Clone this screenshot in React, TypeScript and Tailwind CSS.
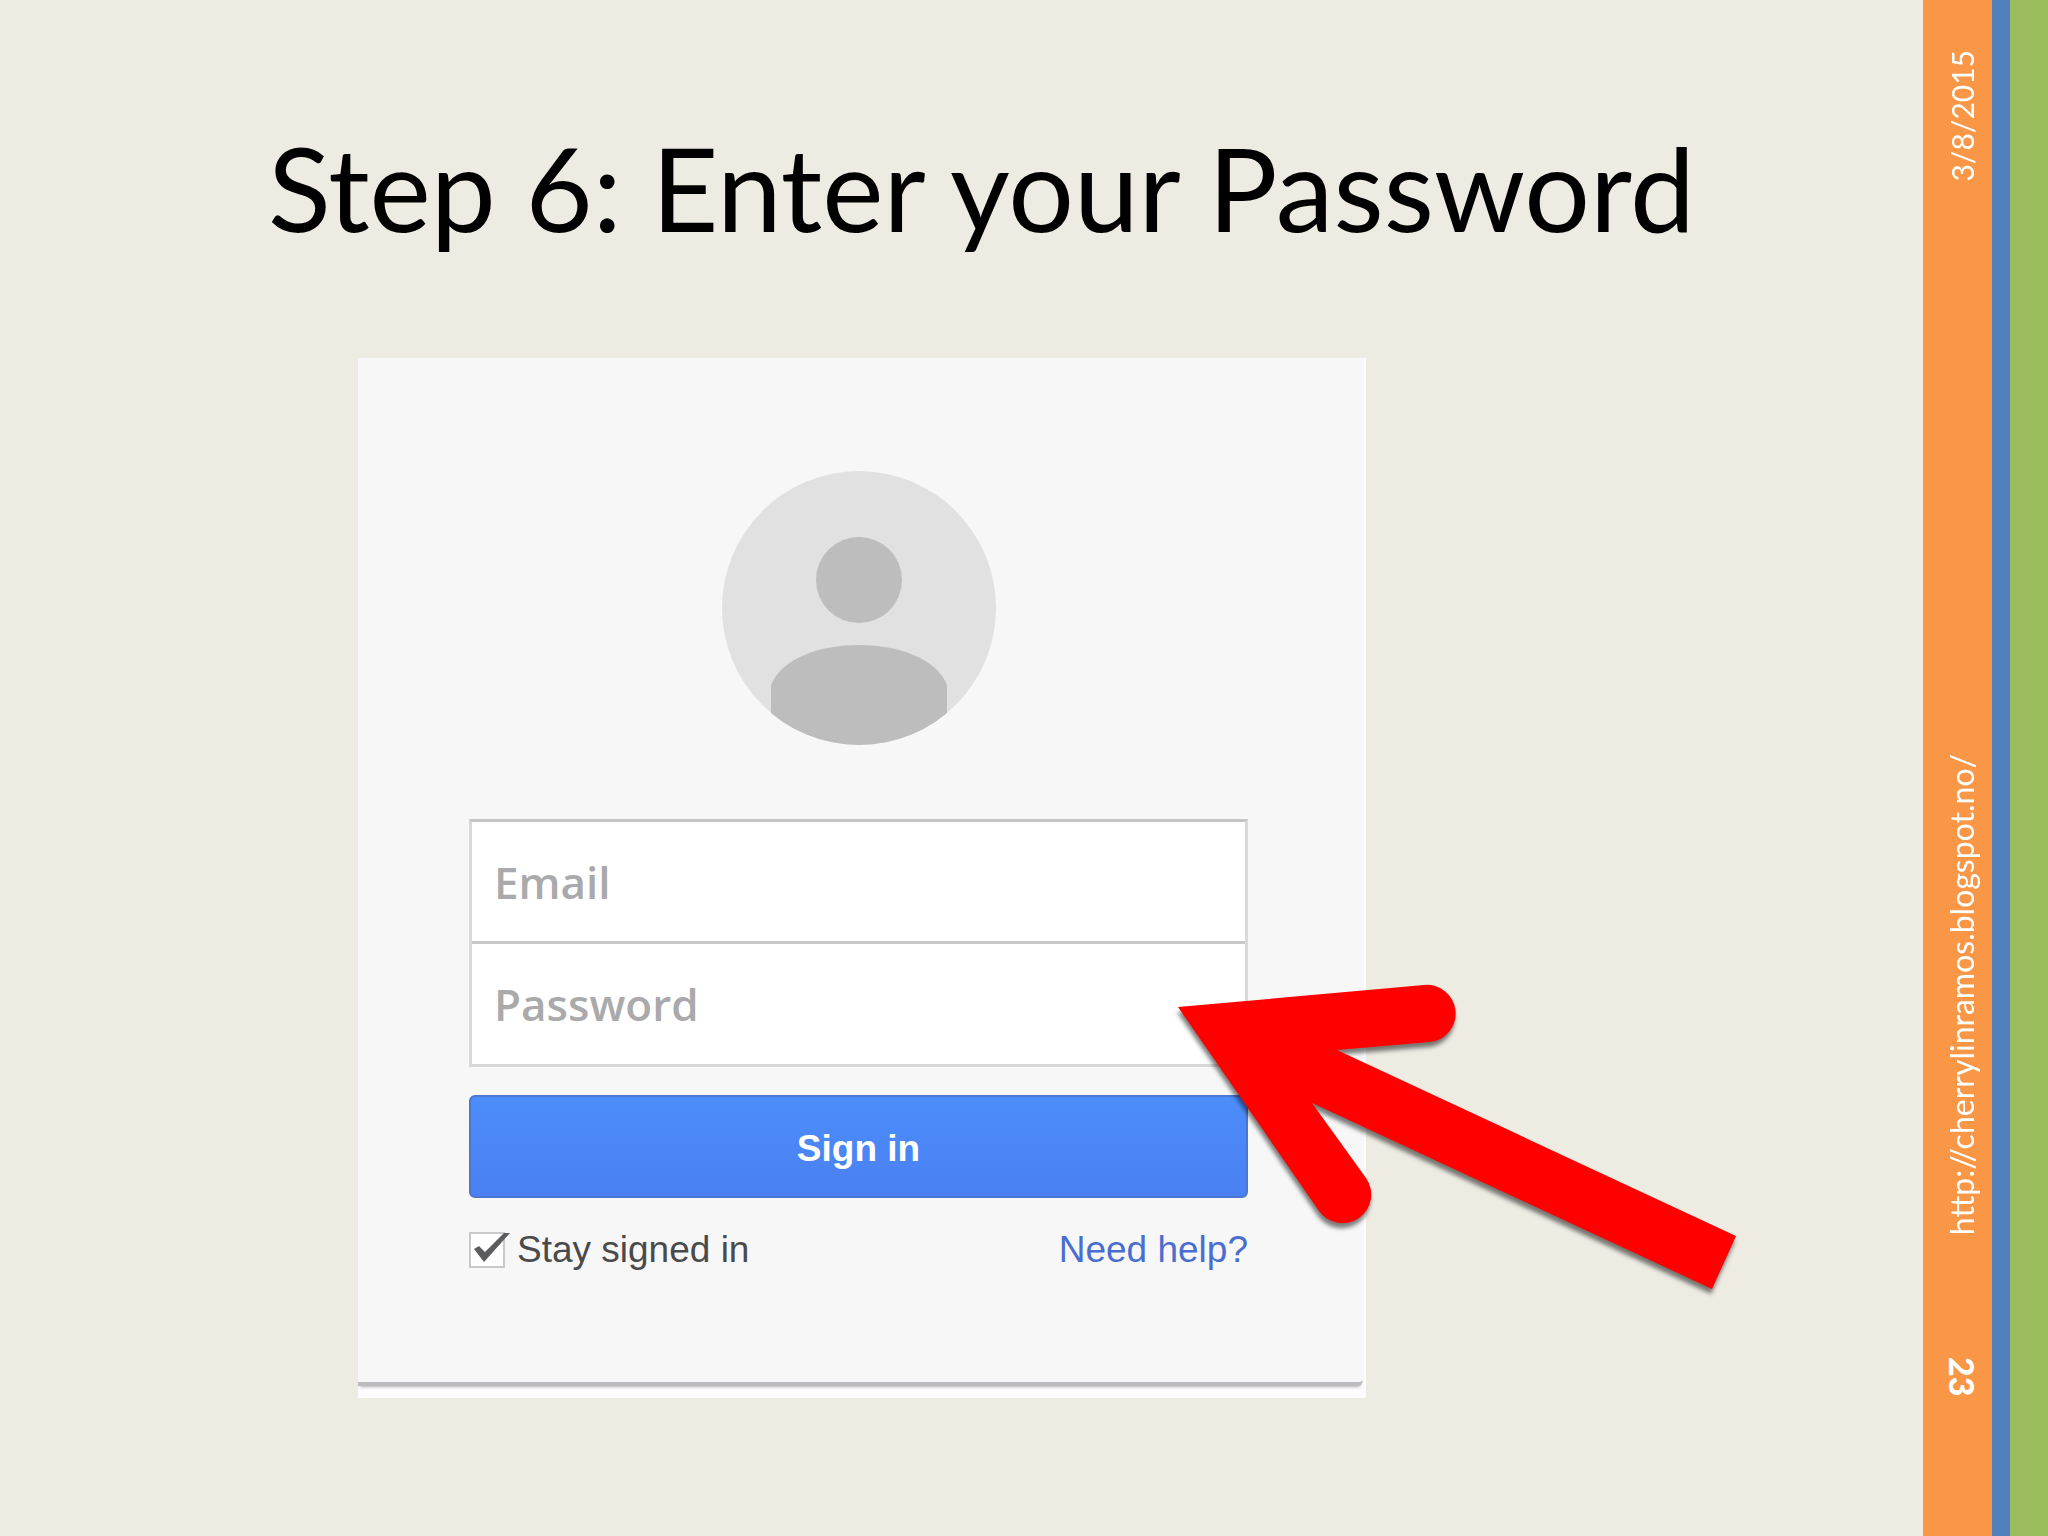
import React from "react";

function Avatar() {
    return (
        <svg viewBox="0 0 274 274" className="mx-auto block w-[274px]" role="img" aria-label="Profile">
            <defs>
                <clipPath id="avatar-clip">
                    <circle cx="137" cy="137" r="137"/>
                </clipPath>
            </defs>
            <circle cx="137" cy="137" r="137" fill="#e2e1e2"/>
            <g clipPath="url(#avatar-clip)" fill="#bebdbe">
                <circle cx="137" cy="109" r="43"/>
                <path d="M49 274V214C60 187 98 174 137 174S214 187 225 214V274Z"/>
            </g>
        </svg>
    );
}

/* Big red arrow that points at the password field */
function Arrow() {
    return (
        <svg
            viewBox="0 0 580 330"
            className="pointer-events-none absolute top-[616px] left-[812px] w-[580px] max-w-none overflow-visible drop-shadow-[-1px_5px_2px_rgba(0,0,0,0.5)]"
            aria-hidden="true"
        >
            <path
                d="M8 33L254 11A28.5 28.5 0 0 1 260 68L167 76L566 262L542 315L142 129L196 204A28.5 28.5 0 0 1 149 237Z"
                fill="#ff0000"
            />
        </svg>
    );
}

function SignInCard() {
    return (
        <div className="relative w-full max-w-[1008px] bg-[#fdfbfd] pr-[3px] pb-3">
            <form
                onSubmit={(e) => e.preventDefault()}
                className="rounded-br-md border-b-4 border-[#bdbbbf] bg-[#f8f7f8] pt-[113px] pr-[115px] pb-[110px] pl-[111px] font-['Liberation_Sans',sans-serif] text-[37px] leading-[44px] shadow-[0_3px_3px_-2px_rgba(0,0,0,0.3)]"
            >
                <Avatar/>

                <div className="mt-[74px] border-[3px] border-[#d9d8da] border-t-[#c4c3c5] bg-white font-['Open_Sans',sans-serif] text-[44px] font-semibold">
                    <input
                        type="email"
                        aria-label="Email"
                        placeholder="Email"
                        className="block h-[122px] w-full border-b-[3px] border-[#c8c7c9] px-[22px] outline-none placeholder:text-[#aaa9ab]"
                    />
                    <input
                        type="password"
                        aria-label="Password"
                        placeholder="Password"
                        className="block h-[120px] w-full px-[22px] outline-none placeholder:text-[#aaa9ab]"
                    />
                </div>

                <button
                    type="submit"
                    className="mt-7 h-[103px] w-full rounded-md border-2 border-[#4a77cf] bg-linear-to-b from-[#4c8dfb] to-[#4a80f2] pt-1 font-bold text-white"
                >
                    Sign in
                </button>

                <div className="mt-[30px] flex items-center justify-between">
                    <label className="flex items-center gap-3 text-[#4a4a4c]">
                        <span className="relative block size-9">
                            <input
                                type="checkbox"
                                defaultChecked
                                className="peer block size-9 appearance-none border-2 border-[#c9c8ca] bg-white"
                            />
                            <svg viewBox="0 0 42 37"
                                 className="pointer-events-none absolute top-0 left-0 hidden w-[42px] max-w-none peer-checked:block"
                                 aria-hidden="true">
                                <path d="M5 17L10 14L16 20L35 1L41 1L15 30Z" fill="#5c5b5d"/>
                            </svg>
                        </span>
                        Stay signed in
                    </label>
                    <a href="#help" className="text-[#4a6dd0]">Need help?</a>
                </div>
            </form>

            <Arrow/>
        </div>
    );
}

function SideBar() {
    return (
        <aside className="flex shrink-0 font-['Lato',sans-serif] text-white">
            <div className="flex w-[69px] flex-col items-center bg-[#f99746] pt-[50px] pb-[140px] pl-2 text-[30px] leading-9">
                <time dateTime="2015-03-08" className="rotate-180 [writing-mode:vertical-rl]">3/8/2015</time>
                <a href="http://cherrylinramos.blogspot.no/"
                   className="mt-auto mb-[121px] rotate-180 text-[32px] [writing-mode:vertical-rl]">
                    http://cherrylinramos.blogspot.no/
                </a>
                <span className="text-[34px] font-black [writing-mode:vertical-rl]">23</span>
            </div>
            <div className="w-[18px] bg-[#5180bc]"/>
            <div className="w-[38px] bg-[#9bbd5e]"/>
        </aside>
    );
}

export default function App() {
    return (
        <div className="flex min-h-screen bg-[#eeebe3]">
            <main className="min-w-0 flex-1 pt-[122px]">
                <h1 className="pl-10 text-center font-['Lato',sans-serif] text-[116px] leading-[132px] text-black">
                    Step 6: Enter your Password
                </h1>
                <div className="mt-[104px] pl-[358px]">
                    <SignInCard/>
                </div>
            </main>
            <SideBar/>
        </div>
    );
}
